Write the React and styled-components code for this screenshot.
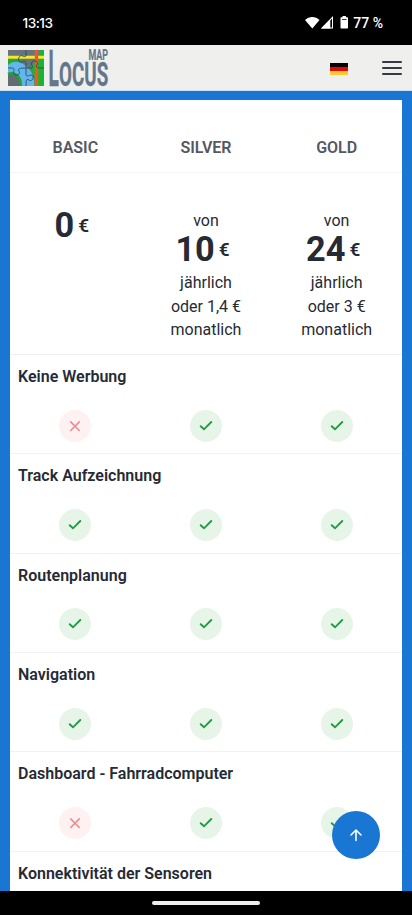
import React from "react";
import styled, { createGlobalStyle } from "styled-components";

const GlobalStyle = createGlobalStyle`
  *, *::before, *::after { box-sizing: border-box; }
  body { margin: 0; background: #000; font-family: Roboto, "Noto Sans", sans-serif; overflow: hidden; }
`;

const Screen = styled.div`
  width: 412px;
  height: 915px;
  display: flex;
  flex-direction: column;
  background: #000;
  color: #262a35;
  position: relative;
  overflow: hidden;
`;

const StatusBar = styled.header`
  flex: 0 0 45px;
  display: flex;
  align-items: center;
  justify-content: space-between;
  padding: 0 29px 0 22.5px;
  color: #fff;
  font-size: 14px;
  font-weight: 500;
`;

const Clock = styled.time`
  font-family: Inter, Roboto, sans-serif;
  font-size: 13.6px;
  letter-spacing: -0.5px;
`;

const Indicators = styled.div`
  display: flex;
  align-items: center;
  svg { display: block; }
`;

const Battery = styled.span`
  margin-left: 4px;
`;

const AppBar = styled.div`
  flex: 0 0 46px;
  display: flex;
  align-items: center;
  background: #efefee;
  border-bottom: 1px solid #c9dff2;
  padding: 1px 10px 0 8px;
  svg { display: block; overflow: visible; }
`;

const Flag = styled.span`
  display: grid;
  grid-template-rows: repeat(3, 1fr);
  width: 18px;
  height: 12px;
  margin: 2px 34px 0 auto;
`;

const Stripe = styled.span`
  background: ${({ $color }) => $color};
`;

const Burger = styled.button`
  display: flex;
  flex-direction: column;
  justify-content: space-between;
  width: 20px;
  height: 14px;
  padding: 0;
  border: 0;
  background: none;
`;

const BurgerLine = styled.span`
  height: 2px;
  border-radius: 1px;
  background: #353945;
`;

const Content = styled.main`
  flex: 1 1 0;
  min-height: 0;
  overflow: hidden;
  padding: 9px 10px 0;
  background: #1976d2;
`;

const Card = styled.section`
  height: 100%;
  background: #fff;
  overflow: hidden;
`;

const Columns = styled.div`
  display: grid;
  grid-template-columns: repeat(3, 1fr);
  justify-items: center;
`;

const PlanRow = styled(Columns)`
  height: 72.5px;
  padding-top: 36px;
  border-bottom: 1px solid #f3f4f5;
`;

const PlanName = styled.h2`
  margin: 0;
  font-size: 16px;
  line-height: 24px;
  font-weight: 600;
  color: #545863;
`;

const PriceRow = styled(Columns)`
  height: 182.3px;
  padding-top: 36px;
  border-bottom: 1px solid #eff0f2;
`;

const Price = styled.div`
  text-align: center;
  font-size: 16px;
  line-height: 23.8px;
`;

const Line = styled.div`
  white-space: nowrap;
`;

const Amount = styled.div`
  display: flex;
  align-items: center;
  justify-content: center;
  gap: 4px;
  height: 35px;
  margin-bottom: ${({ $solo }) => ($solo ? "0" : "3.5px")};
  font-size: 34.3px;
  font-weight: 700;
  margin-right: 7px;
`;

const Currency = styled.span`
  font-size: 19px;
  font-weight: 600;
`;

const Feature = styled.article`
  height: 99.4px;
  border-bottom: 1px solid #f0f1f3;
`;

const FeatureName = styled.h3`
  margin: 0;
  padding: 10px 8px 0;
  font-size: 16px;
  line-height: 24px;
  font-weight: 600;
  white-space: nowrap;
`;

const Marks = styled(Columns)`
  padding-top: 20.9px;
`;

const Mark = styled.span`
  display: flex;
  align-items: center;
  justify-content: center;
  width: 32px;
  height: 32px;
  border-radius: 50%;
  color: ${({ $on }) => ($on ? "#219a43" : "#f18a91")};
  background: ${({ $on }) => ($on ? "#e7f5e9" : "#fef1f2")};
`;

const ToTop = styled.button`
  position: absolute;
  left: 332px;
  top: 811px;
  width: 48px;
  height: 48px;
  display: flex;
  align-items: center;
  justify-content: center;
  border: 0;
  padding: 0;
  border-radius: 50%;
  color: #fff;
  background: #1976d2;
`;

const GestureBar = styled.footer`
  flex: 0 0 24px;
  display: flex;
  justify-content: center;
  padding-top: 10px;
`;

const Handle = styled.span`
  width: 108px;
  height: 4px;
  border-radius: 2px;
  background: #eee;
`;

function Logo() {
  return (
    <svg width="104" height="38" viewBox="0 0 104 38" role="img" aria-label="Locus Map">
      <svg x="0" y="1" width="36" height="36" viewBox="0 0 36 36">
        <rect width="36" height="36" fill="#66757c" />
        <path d="M0 14C7 10 14 12 19 17C25 22 26 29 27 36H0Z" fill="#65b5ed" />
        <path d="M0 9H12L17 12C10 10 5 11 0 15Z" fill="#20aa38" />
        <path d="M31 0H36V36H26C28 27 25 22 21 18L31 10Z" fill="#18b535" />
        <path d="M0 25C6 21 13 26 12 36H0Z" fill="#636c70" />
        <path d="M0 24C7 21 13 27 13 36" fill="none" stroke="#20a337" strokeWidth="2.5" />
        <path d="M0 7.3H36" stroke="#f6e72b" strokeWidth="3" />
        <path d="M28.5 0V36" stroke="#f15623" strokeWidth="3.4" />
        <g fill="none" stroke="#214c5c" strokeWidth="1" strokeOpacity=".85">
          <path d="M18 0V6C16 8 14 4 11.500 6.500C9.500 9 11 13 14 12C17 10 18 12 18 15V25C20 28 22 23 25 26C26 29 23 32 21 30C18 28 18 31 18 36" />
          <path d="M0 18H5C8 20 4 21 6 24C9 27 13 24 11 21C9 19 12 18 18 18H24C26 17 22 15 24 12C27 9 31 12 29 15C27 18 30 18 36 18" />
        </g>
      </svg>
      <g fill="#64768a" stroke="#64768a" fontFamily="Roboto, sans-serif" fontWeight="700">
        <text x="40.6" y="36.5" fontSize="49.5" strokeWidth="0.5" textLength="10.3" lengthAdjust="spacingAndGlyphs">L</text>
        <text x="51" y="36.5" fontSize="33" strokeWidth="0.3" textLength="49.2" lengthAdjust="spacingAndGlyphs">OCUS</text>
        <text x="80.4" y="11" fontSize="14" strokeWidth="0.2" textLength="19.6" lengthAdjust="spacingAndGlyphs">MAP</text>
      </g>
    </svg>
  );
}

function SignalIcons() {
  return (
    <svg width="44" height="14" viewBox="0 0 44 14" fill="#fff" aria-hidden="true">
      <path d="M0 4C4-.1 10.500-.1 14.500 4L7.300 12.500Z" />
      <path d="M25.300 3.200V12.500H16Z" />
      <path d="M28 0V12.500H16ZM27 2.400L18.400 11.500H27Z" fillRule="evenodd" />
      <path d="M37.500 0H41V1.200H42C42.600 1.200 43 1.600 43 2.200V11.500C43 12.100 42.600 12.500 42 12.500H36.500C35.900 12.500 35.500 12.100 35.500 11.500V2.200C35.500 1.600 35.900 1.200 36.500 1.200H37.500Z" />
      <path d="M37 3.500H41.500" stroke="#333" strokeWidth="1" />
    </svg>
  );
}

function Availability({ on }) {
  return (
    <Mark $on={on}>
      <svg width="16" height="16" viewBox="0 0 16 16" fill="none" stroke="currentColor" strokeWidth="1.9" strokeLinecap="round" aria-hidden="true">
        {on ? <path d="M2.700 8.200L6 11.300L13.300 4" /> : <path d="M3.700 3.900L12.300 12.500M12.300 3.900L3.700 12.500" strokeWidth="1.600" />}
      </svg>
    </Mark>
  );
}

const plans = [
  { name: "BASIC", amount: "0" },
  { name: "SILVER", amount: "10", monthly: "oder 1,4 €" },
  { name: "GOLD", amount: "24", monthly: "oder 3 €" },
];

const features = [
  { name: "Keine Werbung", basic: false },
  { name: "Track Aufzeichnung", basic: true },
  { name: "Routenplanung", basic: true },
  { name: "Navigation", basic: true },
  { name: "Dashboard - Fahrradcomputer", basic: false },
  { name: "Konnektivität der Sensoren", basic: true },
];

export default function App() {
  return (
    <>
      <GlobalStyle />
      <Screen>
        <StatusBar>
          <Clock>13:13</Clock>
          <Indicators>
            <SignalIcons />
            <Battery>77 %</Battery>
          </Indicators>
        </StatusBar>
        <AppBar>
          <Logo />
          <Flag role="img" aria-label="Deutsch">
            <Stripe $color="#090000" />
            <Stripe $color="#e00b08" />
            <Stripe $color="#f8cc2c" />
          </Flag>
          <Burger aria-label="Menü">
            <BurgerLine />
            <BurgerLine />
            <BurgerLine />
          </Burger>
        </AppBar>
        <Content>
          <Card>
            <PlanRow>
              {plans.map((p) => <PlanName key={p.name}>{p.name}</PlanName>)}
            </PlanRow>
            <PriceRow>
              {plans.map((p) => (
                <Price key={p.name}>
                  {p.monthly && <Line>von</Line>}
                  <Amount $solo={!p.monthly}>{p.amount}<Currency>€</Currency></Amount>
                  {p.monthly && (
                    <>
                      <Line>jährlich</Line>
                      <Line>{p.monthly}</Line>
                      <Line>monatlich</Line>
                    </>
                  )}
                </Price>
              ))}
            </PriceRow>
            {features.map((f) => (
              <Feature key={f.name}>
                <FeatureName>{f.name}</FeatureName>
                <Marks>
                  <Availability on={f.basic} />
                  <Availability on />
                  <Availability on />
                </Marks>
              </Feature>
            ))}
          </Card>
        </Content>
        <ToTop aria-label="Nach oben">
          <svg width="16" height="16" viewBox="0 0 16 16" fill="none" stroke="currentColor" strokeWidth="1.6" strokeLinecap="round" strokeLinejoin="round" aria-hidden="true">
            <path d="M8 13.500V3M3 8L8 3L13 8" />
          </svg>
        </ToTop>
        <GestureBar><Handle /></GestureBar>
      </Screen>
    </>
  );
}
